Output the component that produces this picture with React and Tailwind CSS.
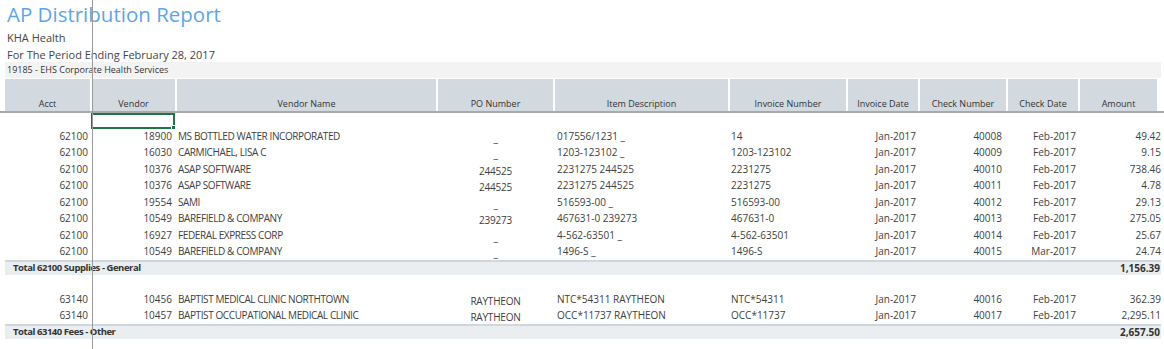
import React from "react";

const cols = "grid grid-cols-[85px_83px_259px_115px_173px_116px_70px_86px_70px_77px] gap-x-[2px]";

const headers = ["Acct", "Vendor", "Vendor Name", "PO Number", "Item Description", "Invoice Number", "Invoice Date", "Check Number", "Check Date", "Amount"];

const group1 = [
  ["62100", "18900", "MS BOTTLED WATER INCORPORATED", "_", "017556/1231 _", "14", "Jan-2017", "40008", "Feb-2017", "49.42"],
  ["62100", "16030", "CARMICHAEL, LISA C", "_", "1203-123102 _", "1203-123102", "Jan-2017", "40009", "Feb-2017", "9.15"],
  ["62100", "10376", "ASAP SOFTWARE", "244525", "2231275 244525", "2231275", "Jan-2017", "40010", "Feb-2017", "738.46"],
  ["62100", "10376", "ASAP SOFTWARE", "244525", "2231275 244525", "2231275", "Jan-2017", "40011", "Feb-2017", "4.78"],
  ["62100", "19554", "SAMI", "_", "516593-00 _", "516593-00", "Jan-2017", "40012", "Feb-2017", "29.13"],
  ["62100", "10549", "BAREFIELD & COMPANY", "239273", "467631-0 239273", "467631-0", "Jan-2017", "40013", "Feb-2017", "275.05"],
  ["62100", "16927", "FEDERAL EXPRESS CORP", "_", "4-562-63501 _", "4-562-63501", "Jan-2017", "40014", "Feb-2017", "25.67"],
  ["62100", "10549", "BAREFIELD & COMPANY", "_", "1496-S _", "1496-S", "Jan-2017", "40015", "Mar-2017", "24.74"],
];

const group2 = [
  ["63140", "10456", "BAPTIST MEDICAL CLINIC NORTHTOWN", "RAYTHEON", "NTC*54311 RAYTHEON", "NTC*54311", "Jan-2017", "40016", "Feb-2017", "362.39"],
  ["63140", "10457", "BAPTIST OCCUPATIONAL MEDICAL CLINIC", "RAYTHEON", "OCC*11737 RAYTHEON", "OCC*11737", "Jan-2017", "40017", "Feb-2017", "2,295.11"],
];

function Row({ r }) {
  return (
    <div className={`${cols} h-[16.5px] items-center text-[10px] text-[#404040] whitespace-nowrap`}>
      <div className="text-right pr-[2px]">{r[0]}</div>
      <div className="text-right pr-[3px]">{r[1]}</div>
      <div className="pl-[1px] tracking-[-0.4px]">{r[2]}</div>
      <div className="text-center tracking-[-0.2px] translate-y-[2px]">{r[3]}</div>
      <div className="pl-[2px]">{r[4]}</div>
      <div className="pl-[1px]">{r[5]}</div>
      <div className="text-right pr-[2px]">{r[6]}</div>
      <div className="text-right pr-[4px]">{r[7]}</div>
      <div className="text-right pr-[2px]">{r[8]}</div>
      <div className="text-right -mr-[4px]">{r[9]}</div>
    </div>
  );
}

function Total({ label, amount, h }) {
  return (
    <div className={`flex items-center justify-between ${h} bg-[#eaeef1] border-t-2 border-[#cfd7dd] pl-[8px] pr-[1px] text-[#333] w-[1156px] whitespace-nowrap`}>
      <span className="text-[9.5px] font-bold tracking-[-0.45px]">{label}</span>
      <span className="text-[10px] font-bold">{amount}</span>
    </div>
  );
}

export default function App() {
  return (
    <div className="relative w-[1164px] h-[349px] bg-white overflow-hidden font-['Open_Sans',sans-serif]">
      <div className="pl-[7px]">
        <div className="h-[29px] text-[20.5px] leading-[29px] text-[#5ba6e8] whitespace-nowrap">AP Distribution Report</div>
        <div className="h-[17px] text-[11px] leading-[17px] text-[#444]">KHA Health</div>
        <div className="h-[16px] text-[11px] leading-[17px] text-[#444]">For The Period Ending February 28, 2017</div>
      </div>
      <div className="ml-[5px] w-[1156px] h-[16px] bg-[#f3f3f3] pl-[2px] text-[9px] leading-[16px] text-[#333] whitespace-nowrap">
        19185 - EHS Corporate Health Services
      </div>
      <div className="h-[1px]" />
      <div className="border-b-2 border-[#a9a9a9] w-[1164px]">
        <div className={`${cols} ml-[5px] h-[32px]`}>
          {headers.map((h) => (
            <div key={h} className="bg-[#d2dadf] flex items-end justify-center pb-[1px] text-[9px] text-[#333] whitespace-nowrap">
              {h}
            </div>
          ))}
        </div>
      </div>
      <div className="ml-[5px]">
        <div className={`${cols} h-[15px]`}>
          <div />
          <div className="relative -ml-[1px] border-2 border-[#217346] h-[16px]">
            <div className="absolute -right-[3px] -bottom-[3px] w-[5px] h-[5px] bg-[#217346] border border-white" />
          </div>
        </div>
        {group1.map((r, i) => (
          <Row key={i} r={r} />
        ))}
        <Total label="Total 62100 Supplies - General" amount="1,156.39" h="h-[15px]" />
        <div className="h-[16px]" />
        {group2.map((r, i) => (
          <Row key={i} r={r} />
        ))}
        <Total label="Total 63140 Fees - Other" amount="2,657.50" h="h-[15px]" />
      </div>
      <div className="absolute left-[92px] top-0 w-[1px] h-[349px] bg-[#9b9b9b]" />
    </div>
  );
}
